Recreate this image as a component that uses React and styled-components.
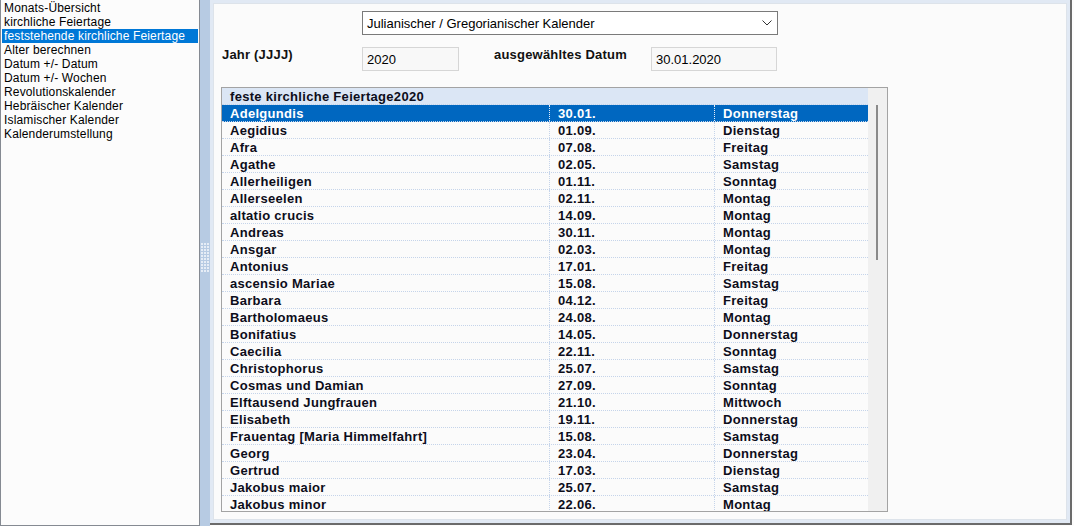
import React from 'react';
import styled, { createGlobalStyle } from 'styled-components';

const GlobalStyle = createGlobalStyle`
  html, body {
    margin: 0;
    padding: 0;
    background: #fcfcfc;
  }
  body {
    font-family: "Liberation Sans", Arial, sans-serif;
  }
`;

const Window = styled.div`
  display: flex;
  width: 1074px;
  height: 526px;
  overflow: hidden;
  background: #fcfcfc;
`;

const NavPanel = styled.ul`
  list-style: none;
  margin: 0;
  padding: 1px 1px 0 1px;
  width: 196px;
  height: 524px;
  flex: none;
  box-sizing: content-box;
  background: #fcfcfc;
  border: 1px solid #858a92;
  border-top: none;
  font-size: 12px;
  letter-spacing: 0.15px;
`;

const NavItem = styled.li`
  height: 14px;
  line-height: 14px;
  padding-left: 2px;
  white-space: nowrap;
  color: ${props => (props.active ? '#fff' : '#000')};
  background: ${props => (props.active ? '#0078d7' : 'transparent')};
`;

const Splitter = styled.div`
  width: 10px;
  flex: none;
  background: #b7cbe3;
  display: flex;
  align-items: center;
  justify-content: center;
  padding-bottom: 10px;
`;

const Frame = styled.div`
  flex: 1;
  display: flex;
  padding: 3px;
  margin: 0 2px 1px 0;
  background: #e1e9f4;
  border-right: 2px solid #6b6b6b;
  border-bottom: 2px solid #6b6b6b;
`;

const Content = styled.div`
  flex: 1;
  background: #fbfbfb;
  border: 1px solid #dde3ea;
  padding: 7px 0 0 7px;
  display: flex;
  flex-direction: column;
`;

const SelectBox = styled.div`
  margin-left: 141px;
  width: 405px;
  height: 22px;
  border: 1px solid #7a7a7a;
  background: #fff;
  display: flex;
  align-items: center;
  justify-content: space-between;
  padding: 0 5px 0 4px;
  box-sizing: content-box;
  font-size: 13px;
  color: #000;
`;

const FormRow = styled.div`
  display: grid;
  grid-template-columns: 141px 97px 35px 157px 126px;
  margin-top: 12px;
  align-items: start;
`;

const Label = styled.div`
  font-size: 13px;
  font-weight: bold;
  color: #111;
  padding-left: ${props => (props.first ? '1px' : '0')};
  margin-top: 1px;
  line-height: 14px;
  letter-spacing: 0.2px;
`;

const Field = styled.div`
  height: 22px;
  border: 1px solid #d6d6d6;
  background: #f8f8f8;
  font-size: 13px;
  line-height: 23px;
  padding-left: 4px;
  color: #000;
`;

const Table = styled.div`
  margin-top: 16px;
  width: 665px;
  height: 423px;
  border: 1px solid #a3a3a3;
  display: flex;
  overflow: hidden;
  background: #fbfbfb;
`;

const Grid = styled.div`
  width: 646px;
  display: flex;
  flex-direction: column;
`;

const Row = styled.div`
  display: grid;
  grid-template-columns: 327px 165px 154px;
  height: 16px;
  flex: none;
  border-bottom: 1px dotted #c5d4ea;
  background: ${props => (props.head ? '#dbe6f5' : props.selected ? '#0067c0' : 'transparent')};
  color: ${props => (props.selected ? '#fff' : '#0d0d1a')};
  font-size: 13px;
  font-weight: bold;
  letter-spacing: 0.3px;
  line-height: 18px;
`;

const Cell = styled.div`
  padding-left: 8px;
  white-space: nowrap;
  overflow: hidden;
  border-left: ${props => (props.divider ? `1px dotted ${props.light ? '#e6eef8' : '#c5d4ea'}` : 'none')};
`;

const HeadCell = styled.div`
  grid-column: 1 / 4;
  padding-left: 8px;
`;

const ScrollTrack = styled.div`
  flex: 1;
  background: #f0f0f0;
  display: flex;
  justify-content: center;
  padding-top: 17px;
  box-sizing: border-box;
`;

const Thumb = styled.div`
  width: 2px;
  height: 155px;
  background: #8a8a8a;
  margin-left: -2px;
`;

const navItems = [
  'Monats-Übersicht',
  'kirchliche Feiertage',
  'feststehende kirchliche Feiertage',
  'Alter berechnen',
  'Datum +/- Datum',
  'Datum +/- Wochen',
  'Revolutionskalender',
  'Hebräischer Kalender',
  'Islamischer Kalender',
  'Kalenderumstellung',
];

const feasts = [
  ['Adelgundis', '30.01.', 'Donnerstag'],
  ['Aegidius', '01.09.', 'Dienstag'],
  ['Afra', '07.08.', 'Freitag'],
  ['Agathe', '02.05.', 'Samstag'],
  ['Allerheiligen', '01.11.', 'Sonntag'],
  ['Allerseelen', '02.11.', 'Montag'],
  ['altatio crucis', '14.09.', 'Montag'],
  ['Andreas', '30.11.', 'Montag'],
  ['Ansgar', '02.03.', 'Montag'],
  ['Antonius', '17.01.', 'Freitag'],
  ['ascensio Mariae', '15.08.', 'Samstag'],
  ['Barbara', '04.12.', 'Freitag'],
  ['Bartholomaeus', '24.08.', 'Montag'],
  ['Bonifatius', '14.05.', 'Donnerstag'],
  ['Caecilia', '22.11.', 'Sonntag'],
  ['Christophorus', '25.07.', 'Samstag'],
  ['Cosmas und Damian', '27.09.', 'Sonntag'],
  ['Elftausend Jungfrauen', '21.10.', 'Mittwoch'],
  ['Elisabeth', '19.11.', 'Donnerstag'],
  ['Frauentag [Maria Himmelfahrt]', '15.08.', 'Samstag'],
  ['Georg', '23.04.', 'Donnerstag'],
  ['Gertrud', '17.03.', 'Dienstag'],
  ['Jakobus maior', '25.07.', 'Samstag'],
  ['Jakobus minor', '22.06.', 'Montag'],
];

const Grip = () => (
  <svg width="8" height="30" viewBox="0 0 8 30">
    {Array.from({ length: 10 }).map((_, r) =>
      [0, 3, 6].map(c => (
        <rect key={`${r}-${c}`} x={c} y={r * 3} width="2" height="2" fill="#e6edf6" />
      ))
    )}
  </svg>
);

const Chevron = () => (
  <svg width="10" height="6" viewBox="0 0 10 6">
    <polyline points="0.5,0.5 5,5 9.5,0.5" fill="none" stroke="#333" strokeWidth="1" />
  </svg>
);

export default function App() {
  return (
    <>
      <GlobalStyle />
      <Window>
        <NavPanel>
          {navItems.map((item, i) => (
            <NavItem key={item} active={i === 2}>{item}</NavItem>
          ))}
        </NavPanel>
        <Splitter>
          <Grip />
        </Splitter>
        <Frame>
          <Content>
            <SelectBox>
              <span>Julianischer / Gregorianischer Kalender</span>
              <Chevron />
            </SelectBox>
            <FormRow>
              <Label first>Jahr (JJJJ)</Label>
              <Field>2020</Field>
              <span />
              <Label>ausgewähltes Datum</Label>
              <Field>30.01.2020</Field>
            </FormRow>
            <Table>
              <Grid>
                <Row head>
                  <HeadCell>feste kirchliche Feiertage2020</HeadCell>
                </Row>
                {feasts.map(([name, date, day], i) => (
                  <Row key={name} selected={i === 0}>
                    <Cell>{name}</Cell>
                    <Cell divider light={i === 0}>{date}</Cell>
                    <Cell divider light={i === 0}>{day}</Cell>
                  </Row>
                ))}
              </Grid>
              <ScrollTrack>
                <Thumb />
              </ScrollTrack>
            </Table>
          </Content>
        </Frame>
      </Window>
    </>
  );
}
